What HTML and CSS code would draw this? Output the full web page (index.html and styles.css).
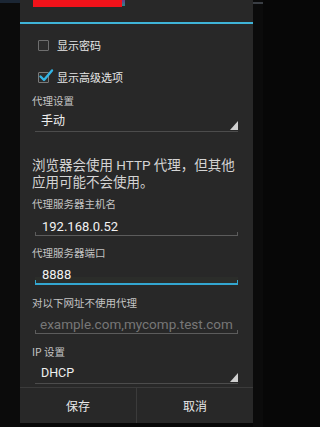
FILE: index.html
```html
<!DOCTYPE html>
<html lang="zh">
<head>
<meta charset="utf-8">
<link rel="stylesheet" href="styles.css">
</head>
<body>
<div class="screen">
  <div class="edge-left"></div>
  <div class="dialog">
    <div class="title">
      <div class="redact"></div><div class="redact-tail"></div>
    </div>
    <div class="title-line"></div>
    <div class="content">
      <div class="check-row">
        <span class="box"></span>
        <span class="check-text">显示密码</span>
      </div>
      <div class="check-row">
        <span class="box checked">
          <svg viewBox="0 0 16 16" width="16" height="16"><path d="M2.5 8.5 L6 12 L14 2.5" fill="none" stroke="#33b5e5" stroke-width="2.4" stroke-linecap="round" stroke-linejoin="round"/></svg>
        </span>
        <span class="check-text">显示高级选项</span>
      </div>
      <div class="label l-proxy">代理设置</div>
      <div class="spinner sp-proxy"><span>手动</span><i class="tri"></i></div>
      <div class="desc">浏览器会使用 HTTP 代理，但其他应用可能不会使用。</div>
      <div class="label l-host">代理服务器主机名</div>
      <div class="edit e-host">192.168.0.52</div>
      <div class="label l-port">代理服务器端口</div>
      <div class="edit focused e-port">8888</div>
      <div class="label l-excl">对以下网址不使用代理</div>
      <div class="edit hint e-excl">example.com,mycomp.test.com</div>
      <div class="label l-ip">IP 设置</div>
      <div class="spinner sp-ip"><span>DHCP</span><i class="tri"></i></div>
    </div>
    <div class="buttons">
      <div class="btn">保存</div>
      <div class="btn">取消</div>
    </div>
  </div>
  <div class="edge-right"></div>
</div>
</body>
</html>
```
FILE: styles.css
```css
html, body {
  margin: 0;
  padding: 0;
  background: #070707;
  width: 263px;
  height: 427px;
  overflow: hidden;
  font-family: "Noto Sans CJK SC", Roboto, sans-serif;
}

.screen {
  position: relative;
  display: flex;
  width: 263px;
  height: 427px;
}

.edge-left {
  width: 20px;
  height: 427px;
  background: linear-gradient(to bottom, #1b2634 0, #1b2634 3px, #0b0b0b 3px);
}

.edge-right {
  flex: 1;
  height: 427px;
  background: linear-gradient(to bottom, #0a0a0a 0, #0a0a0a 2px, #3a3e44 2px, #3a3e44 4px, #0b0b0b 4px);
}

.dialog {
  width: 233px;
  height: 423px;
  background: #282828;
  display: flex;
  flex-direction: column;
}

.title {
  height: 22px;
  display: flex;
  align-items: flex-start;
}

.redact {
  margin-left: 13px;
  width: 89px;
  height: 7px;
  background: #f2121a;
}

.redact-tail {
  width: 3px;
  height: 6px;
  background: linear-gradient(to bottom, #6a3a8a, #2a8a8a);
}

.title-line {
  height: 2px;
  background: #3fb4d8;
  box-shadow: 0 4px 0 -1px #3a2428;
}

.content {
  padding: 5px 0 0 0;
  display: flex;
  flex-direction: column;
  flex: 1;
}

.check-row {
  height: 32px;
  display: flex;
  align-items: center;
}

.box {
  position: relative;
  margin-left: 18px;
  width: 9px;
  height: 9px;
  border: 1px solid #6e6e6e;
  border-radius: 1px;
  background: #2c2c2c;
}

.box.checked {
  border-color: #7a7a7a;
}

.box svg {
  position: absolute;
  left: -1px;
  top: -5px;
}

.check-text {
  margin-left: 8px;
  font-size: 11px;
  color: #e6e6e6;
  line-height: 14px;
}

.label {
  margin-left: 12px;
  font-size: 10.5px;
  line-height: 14px;
  color: #c4c4c4;
  height: 14px;
}

.l-proxy { margin-top: 1px; }

.spinner {
  position: relative;
  margin: 0 15px;
  padding-left: 6px;
  font-size: 12px;
  color: #f0f0f0;
  border-bottom: 1px solid #4c4c4c;
}

.sp-proxy {
  line-height: 23px;
  height: 23px;
}

.sp-ip {
  margin-top: 4px;
  line-height: 20px;
  height: 20px;
  font-family: Roboto, sans-serif;
  font-size: 12.5px;
}

.tri {
  position: absolute;
  right: 0;
  bottom: 1px;
  width: 0;
  height: 0;
  border-left: 8px solid transparent;
  border-bottom: 9px solid #cfcfcf;
}

.desc {
  margin: 25px 10px 0 12px;
  font-family: Roboto, "Noto Sans CJK SC", sans-serif;
  font-size: 13.5px;
  line-height: 17px;
  color: #d4d4d4;
}

.l-host { margin-top: 6px; }
.l-port { margin-top: 10px; }
.l-excl { margin-top: 11px; }
.l-ip { margin-top: 11px; }

.edit {
  position: relative;
  margin: 0 15px;
  padding-left: 7px;
  font-family: Roboto, sans-serif;
  font-size: 13px;
  line-height: 16px;
  height: 16px;
  color: #f2f2f2;
  border-bottom: 1px solid #5c5c5c;
}

.edit::before, .edit::after {
  content: "";
  position: absolute;
  bottom: 0;
  width: 1px;
  height: 3px;
  background: #5c5c5c;
}

.edit::before { left: 0; }
.edit::after { right: 0; }

.e-host { margin-top: 8px; }

.e-port {
  margin-top: 7px;
  border-bottom: 2px solid #33a6d0;
  background: linear-gradient(to bottom, transparent 60%, #2b2d2a 60%);
}

.e-port::before, .e-port::after { background: #33a6d0; }

.e-excl {
  margin-top: 6px;
  line-height: 17px;
  height: 17px;
  font-size: 13.5px;
  padding-left: 5px;
  color: #777777;
}

.buttons {
  height: 35px;
  border-top: 1px solid #3b3b3b;
  display: flex;
}

.btn {
  flex: 1;
  display: flex;
  align-items: center;
  justify-content: center;
  font-size: 12px;
  color: #e8e8e8;
}

.btn + .btn {
  border-left: 1px solid #3b3b3b;
}
```
